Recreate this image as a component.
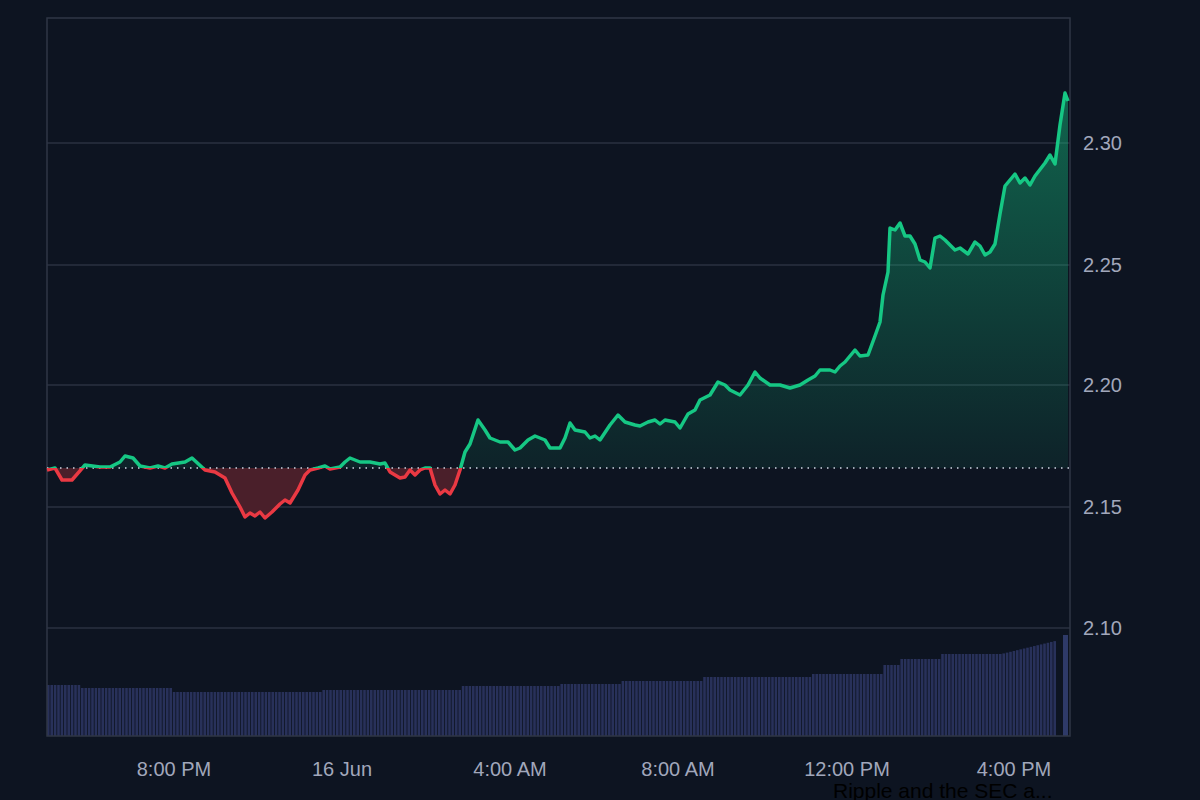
import React from "react";

const raw = `47,470 55,468 62,480 72,480 85,465 100,467 110,467 120,462 125,456 133,458 140,466 150,468 158,466 165,468 172,464 185,462 192,458 205,470 215,472 225,478 232,493 240,507 245,517 250,513 255,516 260,512 265,518 272,512 280,504 285,500 290,503 298,490 305,475 310,470 318,468 325,466 330,469 340,467 345,462 350,458 360,462 370,462 380,464 385,463 390,472 400,478 405,477 410,470 415,475 420,470 425,468 430,468 435,485 440,494 445,490 450,494 455,485 460,470 465,452 470,444 478,420 485,430 490,438 495,440 500,442 508,442 515,450 520,448 528,440 535,436 545,440 550,448 560,448 565,438 570,423 575,430 585,432 590,438 595,436 600,440 610,425 618,415 625,422 635,425 640,426 648,422 655,420 660,424 665,420 675,422 680,428 688,414 695,410 700,400 710,395 718,382 725,385 730,390 740,395 748,385 755,372 760,378 770,385 780,385 790,388 800,385 808,380 815,376 820,370 830,370 835,372 840,366 845,362 855,350 860,356 868,355 875,336 880,322 883,295 888,272 890,228 895,230 900,223 905,236 910,236 915,244 920,260 925,262 930,268 935,238 940,236 945,240 955,250 960,248 968,254 975,242 980,246 985,255 990,252 995,244 1000,214 1005,186 1010,180 1015,174 1020,183 1025,178 1030,185 1035,176 1045,163 1050,155 1055,164 1060,125 1065,93 1068,101`;
const pts = raw.split(" ").map((p) => p.split(",").map(Number));
const line = pts.map(([x, y], i) => `${i ? "L" : "M"}${x},${y}`).join(" ");
const BASE = 468;
const area = `${line} L1068,${BASE} L47,${BASE} Z`;

const steps: [number, number][] = [
  [80, 685], [170, 688], [320, 692], [460, 690], [560, 686], [620, 684], [700, 681], [810, 677], [880, 674], [900, 665], [940, 659], [1000, 654], [1058, 642],
];
const bars: { x: number; y: number }[] = [];
for (let x = 47; x < 1056; x += 3.4) {
  const s = steps.find((st) => x < st[0]) || steps[steps.length - 1];
  let y = s[1];
  if (x > 1000) y = 654 - ((x - 1000) / 58) * 14;
  bars.push({ x, y });
}

const grid = [143, 265, 385, 507, 628];
const yl = ["2.30", "2.25", "2.20", "2.15", "2.10"];
const xl: [number, string][] = [[174, "8:00 PM"], [342, "16 Jun"], [510, "4:00 AM"], [678, "8:00 AM"], [847, "12:00 PM"], [1014, "4:00 PM"]];

export default function App() {
  return (
    <div className="w-[1200px] h-[800px] bg-[#0d1421] overflow-hidden relative" style={{ fontFamily: "'Liberation Sans', Arial, sans-serif" }}>
      <svg width="1200" height="800" className="block">
        <defs>
          <linearGradient id="g" x1="0" y1="90" x2="0" y2="468" gradientUnits="userSpaceOnUse">
            <stop offset="0" stopColor="#16c784" stopOpacity="0.45" />
            <stop offset="1" stopColor="#16c784" stopOpacity="0.08" />
          </linearGradient>
          <clipPath id="above"><rect x="0" y="0" width="1200" height={BASE} /></clipPath>
          <clipPath id="below"><rect x="0" y={BASE} width="1200" height="400" /></clipPath>
        </defs>
        {grid.map((y) => <line key={y} x1="47" x2="1070" y1={y} y2={y} stroke="#2a3140" strokeWidth="1.5" />)}
        {bars.map((b, i) => <rect key={i} x={b.x} y={b.y} width="2.6" height={736 - b.y} fill="#28315a" />)}
        <rect x="1063" y="635" width="5" height="101" fill="#2e3a68" />
        <rect x="47" y="18" width="1023" height="718" fill="none" stroke="#2f3645" strokeWidth="1.5" />
        <path d={area} fill="url(#g)" clipPath="url(#above)" />
        <path d={area} fill="#4a1f2a" clipPath="url(#below)" />
        <line x1="47" x2="1070" y1={BASE} y2={BASE} stroke="#cfd6e4" strokeWidth="1.5" strokeDasharray="1.5 5" />
        <path d={line} fill="none" stroke="#16c784" strokeWidth="3.5" strokeLinejoin="round" clipPath="url(#above)" />
        <path d={line} fill="none" stroke="#ea3943" strokeWidth="3.5" strokeLinejoin="round" clipPath="url(#below)" />
        {grid.map((y, i) => <text key={y} x="1083" y={y + 7} fill="#a1a7bb" fontSize="20">{yl[i]}</text>)}
        {xl.map(([x, t]) => <text key={t} x={x} y="776" fill="#a1a7bb" fontSize="20" textAnchor="middle">{t}</text>)}
        <text x="833" y="798" fill="#000" fontSize="21">Ripple and the SEC a...</text>
      </svg>
    </div>
  );
}
